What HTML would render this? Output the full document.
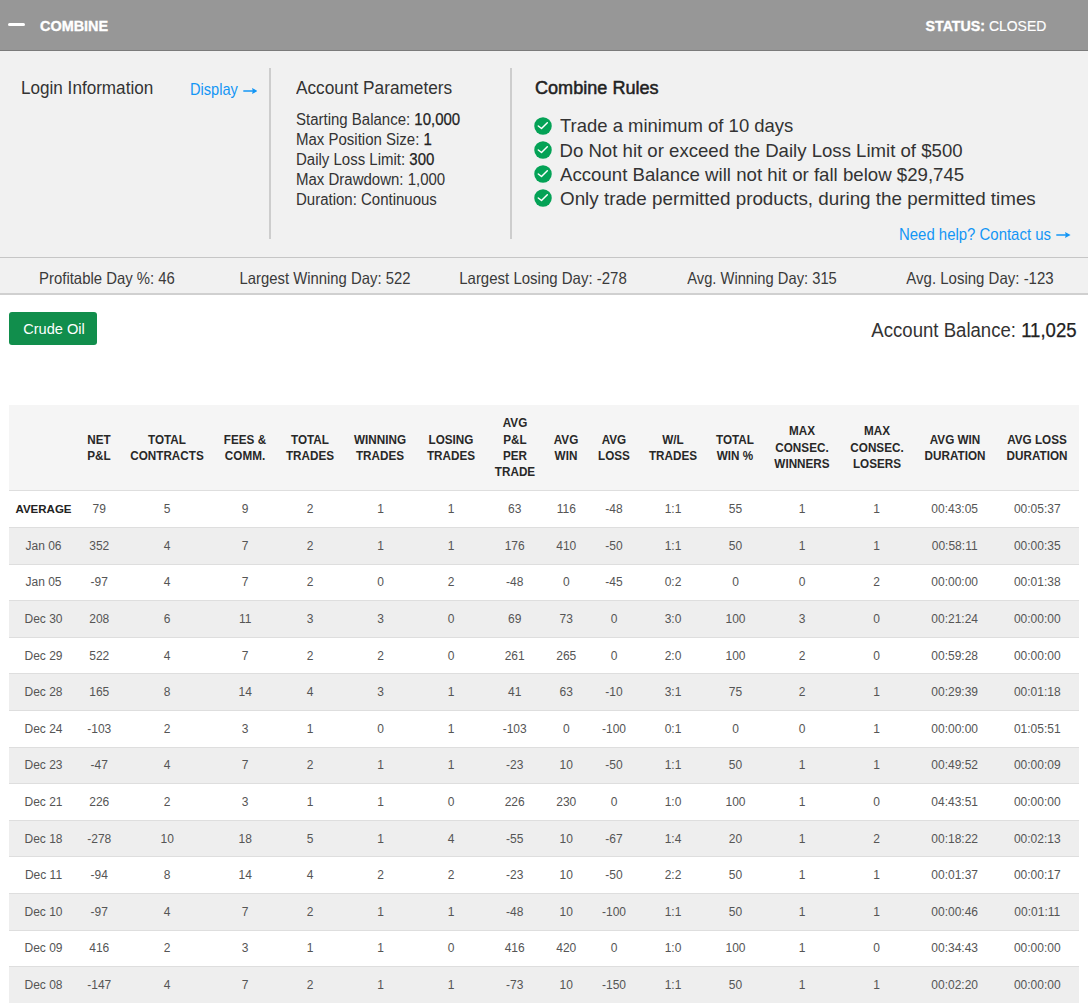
<!DOCTYPE html>
<html><head><meta charset="utf-8"><style>
html,body{margin:0;padding:0;background:#fff;width:1088px;height:1004px;overflow:hidden;position:relative;font-family:"Liberation Sans",sans-serif;color:#333}
.t{position:absolute;white-space:nowrap}
.med{color:#222;-webkit-text-stroke:0.25px #222}
.med2{color:#222 !important;-webkit-text-stroke:0.5px #222}
.hb{-webkit-text-stroke:0.35px #fff}
#hdr{position:absolute;left:0;top:0;width:1088px;height:50px;background:#979797;border-bottom:1px solid #7b7b7b}
#minus{position:absolute;left:7.8px;top:22.6px;width:17.3px;height:3.5px;background:#fff;border-radius:2px}
#panel{position:absolute;left:0;top:51px;width:1088px;height:206px;background:#f1f1f1;border-bottom:1.5px solid #c6c6c6}
#stats{position:absolute;left:0;top:258px;width:1088px;height:35px;background:#f1f1f1;border-bottom:2px solid #d0d0d0}
.vdiv{position:absolute;top:68px;width:2px;height:171px;background:#cdcdcd}
#btn{position:absolute;left:9.4px;top:312.3px;width:88px;height:33px;background:#118e4c;border-radius:3px}
#tbl{position:absolute;left:9.2px;top:404.6px;width:1069.8px;height:600px}
#th{position:absolute;left:0;top:0;width:100%;height:85.4px;background:#f5f5f5;border-bottom:1.5px solid #dedede}
#th .c{top:0.7px;height:85.4px;transform:scaleX(0.975);display:flex;align-items:center;justify-content:center;font-weight:bold;font-size:12px;line-height:16.4px;color:#282828}
.c{position:absolute;width:100px;text-align:center;white-space:nowrap}
.row{position:absolute;left:0;width:100%;height:35.60px;border-top:1px solid #dedede;background:#fff}
.row.odd{background:#eeeeee}
.row .c{top:0.8px;font-size:12px;line-height:35.60px;color:#555}
.row .c.b{font-weight:bold;color:#222;font-size:11.5px}
</style></head><body>
<div id="hdr"><div id="minus"></div></div>
<div class="t hb" style="left:39.90px;top:17.28px;font-size:14.63px;line-height:18.29px;color:#fff;font-weight:bold;transform:scaleX(0.9862);transform-origin:0 0;">COMBINE</div>
<div class="t " style="left:925.60px;top:18.10px;font-size:14.20px;line-height:17.75px;color:#fff;font-weight:normal;"><b class=hb>STATUS:</b> <span style="font-size:13.95px;-webkit-text-stroke:0.15px #fff">CLOSED</span></div>
<div id="panel"></div><div class="vdiv" style="left:269px"></div><div class="vdiv" style="left:510px"></div>
<div class="t " style="left:20.60px;top:75.85px;font-size:18.52px;line-height:23.15px;color:#333;font-weight:normal;transform:scaleX(0.9242);transform-origin:0 0;">Login Information</div>
<div class="t " style="left:190.40px;top:80.05px;font-size:15.69px;line-height:19.62px;color:#1396f5;font-weight:normal;transform:scaleX(0.9302);transform-origin:0 0;">Display</div>
<svg style="position:absolute;left:242.60px;top:85.70px" width="14.6" height="10" viewBox="0 0 14.6 10"><path d="M0.3 5 H11.6" stroke="#1396f5" stroke-width="1.5"/><path d="M9.0 1.9 L14.6 5 L9.0 8.1 L9.8 5 Z" fill="#1396f5"/></svg>
<div class="t " style="left:295.80px;top:75.90px;font-size:18.53px;line-height:23.16px;color:#333;font-weight:normal;transform:scaleX(0.9311);transform-origin:0 0;">Account Parameters</div>
<div class="t " style="left:295.80px;top:110.20px;font-size:16.65px;line-height:19.85px;color:#333;font-weight:normal;transform:scaleX(0.9009);transform-origin:0 0;">Starting Balance: <span class=med>10,000</span><br>Max Position Size: <span class=med>1</span><br>Daily Loss Limit: <span class=med>300</span><br>Max Drawdown: 1,000<br>Duration: Continuous</div>
<div class="t med2" style="left:535.00px;top:76.39px;font-size:18.53px;line-height:23.17px;color:#333;font-weight:normal;transform:scaleX(0.9766);transform-origin:0 0;">Combine Rules</div>
<div style="position:absolute;left:534.3px;top:117.00px;width:18px;height:18px"><svg width="18" height="18" viewBox="0 0 18 18"><circle cx="9" cy="9" r="8.75" fill="#04a256"/><path d="M4.3 9.0 L7.5 11.5 L13.3 5.7" fill="none" stroke="#fff" stroke-width="1.5" stroke-linecap="round" stroke-linejoin="round"/></svg></div>
<div style="position:absolute;left:534.3px;top:141.20px;width:18px;height:18px"><svg width="18" height="18" viewBox="0 0 18 18"><circle cx="9" cy="9" r="8.75" fill="#04a256"/><path d="M4.3 9.0 L7.5 11.5 L13.3 5.7" fill="none" stroke="#fff" stroke-width="1.5" stroke-linecap="round" stroke-linejoin="round"/></svg></div>
<div style="position:absolute;left:534.3px;top:165.30px;width:18px;height:18px"><svg width="18" height="18" viewBox="0 0 18 18"><circle cx="9" cy="9" r="8.75" fill="#04a256"/><path d="M4.3 9.0 L7.5 11.5 L13.3 5.7" fill="none" stroke="#fff" stroke-width="1.5" stroke-linecap="round" stroke-linejoin="round"/></svg></div>
<div style="position:absolute;left:534.3px;top:189.40px;width:18px;height:18px"><svg width="18" height="18" viewBox="0 0 18 18"><circle cx="9" cy="9" r="8.75" fill="#04a256"/><path d="M4.3 9.0 L7.5 11.5 L13.3 5.7" fill="none" stroke="#fff" stroke-width="1.5" stroke-linecap="round" stroke-linejoin="round"/></svg></div>
<div class="t " style="left:559.50px;top:114.43px;font-size:18.60px;line-height:23.25px;color:#333;font-weight:normal;transform:scaleX(0.9930);transform-origin:0 0;">Trade a minimum of 10 days</div>
<div class="t " style="left:559.50px;top:138.63px;font-size:18.60px;line-height:23.25px;color:#333;font-weight:normal;">Do Not hit or exceed the Daily Loss Limit of $500</div>
<div class="t " style="left:559.50px;top:162.83px;font-size:18.60px;line-height:23.25px;color:#333;font-weight:normal;transform:scaleX(1.0027);transform-origin:0 0;">Account Balance will not hit or fall below $29,745</div>
<div class="t " style="left:559.50px;top:187.03px;font-size:18.60px;line-height:23.25px;color:#333;font-weight:normal;transform:scaleX(1.0118);transform-origin:0 0;">Only trade permitted products, during the permitted times</div>
<div class="t " style="left:898.80px;top:224.87px;font-size:15.99px;line-height:19.98px;color:#1396f5;font-weight:normal;transform:scaleX(0.9346);transform-origin:0 0;">Need help? Contact us</div>
<svg style="position:absolute;left:1056.40px;top:229.90px" width="14.6" height="10" viewBox="0 0 14.6 10"><path d="M0.3 5 H11.6" stroke="#1396f5" stroke-width="1.5"/><path d="M9.0 1.9 L14.6 5 L9.0 8.1 L9.8 5 Z" fill="#1396f5"/></svg>
<div id="stats"></div>
<div class="t " style="left:-193.40px;width:600px;text-align:center;top:268.07px;font-size:16.50px;line-height:20.62px;color:#3a3a3a;font-weight:normal;transform:scaleX(0.9030);transform-origin:50% 0;">Profitable Day %: 46</div>
<div class="t " style="left:25.20px;width:600px;text-align:center;top:268.07px;font-size:16.50px;line-height:20.62px;color:#3a3a3a;font-weight:normal;transform:scaleX(0.9000);transform-origin:50% 0;">Largest Winning Day: 522</div>
<div class="t " style="left:242.80px;width:600px;text-align:center;top:268.07px;font-size:16.50px;line-height:20.62px;color:#3a3a3a;font-weight:normal;transform:scaleX(0.9091);transform-origin:50% 0;">Largest Losing Day: -278</div>
<div class="t " style="left:462.25px;width:600px;text-align:center;top:268.07px;font-size:16.50px;line-height:20.62px;color:#3a3a3a;font-weight:normal;transform:scaleX(0.8927);transform-origin:50% 0;">Avg. Winning Day: 315</div>
<div class="t " style="left:680.35px;width:600px;text-align:center;top:268.07px;font-size:16.50px;line-height:20.62px;color:#3a3a3a;font-weight:normal;transform:scaleX(0.9091);transform-origin:50% 0;">Avg. Losing Day: -123</div>
<div id="btn"></div>
<div class="t " style="left:-246.20px;width:600px;text-align:center;top:320.49px;font-size:15.04px;line-height:18.8px;color:#fff;font-weight:normal;transform:scaleX(0.9709);transform-origin:50% 0;">Crude Oil</div>
<div class="t " style="right:11.00px;top:317.84px;font-size:19.72px;line-height:24.65px;color:#333;font-weight:normal;transform:scaleX(0.9434);transform-origin:100% 0;">Account Balance: <span class=med>11,025</span></div>
<div id="tbl"><div id="th"><div class="c" style="left:-15.70px"></div><div class="c" style="left:40.10px">NET<br>P&amp;L</div><div class="c" style="left:108.00px">TOTAL<br>CONTRACTS</div><div class="c" style="left:186.00px">FEES &amp;<br>COMM.</div><div class="c" style="left:250.80px">TOTAL<br>TRADES</div><div class="c" style="left:321.30px">WINNING<br>TRADES</div><div class="c" style="left:391.80px">LOSING<br>TRADES</div><div class="c" style="left:455.50px">AVG<br>P&amp;L<br>PER<br>TRADE</div><div class="c" style="left:507.10px">AVG<br>WIN</div><div class="c" style="left:554.80px">AVG<br>LOSS</div><div class="c" style="left:613.80px">W/L<br>TRADES</div><div class="c" style="left:676.30px">TOTAL<br>WIN %</div><div class="c" style="left:742.80px">MAX<br>CONSEC.<br>WINNERS</div><div class="c" style="left:817.40px">MAX<br>CONSEC.<br>LOSERS</div><div class="c" style="left:895.50px">AVG WIN<br>DURATION</div><div class="c" style="left:978.10px">AVG LOSS<br>DURATION</div></div><div class="row" style="top:85.80px"><div class="c b" style="left:-15.70px">AVERAGE</div><div class="c" style="left:40.10px">79</div><div class="c" style="left:108.00px">5</div><div class="c" style="left:186.00px">9</div><div class="c" style="left:250.80px">2</div><div class="c" style="left:321.30px">1</div><div class="c" style="left:391.80px">1</div><div class="c" style="left:455.50px">63</div><div class="c" style="left:507.10px">116</div><div class="c" style="left:554.80px">-48</div><div class="c" style="left:613.80px">1:1</div><div class="c" style="left:676.30px">55</div><div class="c" style="left:742.80px">1</div><div class="c" style="left:817.40px">1</div><div class="c" style="left:895.50px">00:43:05</div><div class="c" style="left:978.10px">00:05:37</div></div><div class="row odd" style="top:122.40px"><div class="c" style="left:-15.70px">Jan 06</div><div class="c" style="left:40.10px">352</div><div class="c" style="left:108.00px">4</div><div class="c" style="left:186.00px">7</div><div class="c" style="left:250.80px">2</div><div class="c" style="left:321.30px">1</div><div class="c" style="left:391.80px">1</div><div class="c" style="left:455.50px">176</div><div class="c" style="left:507.10px">410</div><div class="c" style="left:554.80px">-50</div><div class="c" style="left:613.80px">1:1</div><div class="c" style="left:676.30px">50</div><div class="c" style="left:742.80px">1</div><div class="c" style="left:817.40px">1</div><div class="c" style="left:895.50px">00:58:11</div><div class="c" style="left:978.10px">00:00:35</div></div><div class="row" style="top:159.00px"><div class="c" style="left:-15.70px">Jan 05</div><div class="c" style="left:40.10px">-97</div><div class="c" style="left:108.00px">4</div><div class="c" style="left:186.00px">7</div><div class="c" style="left:250.80px">2</div><div class="c" style="left:321.30px">0</div><div class="c" style="left:391.80px">2</div><div class="c" style="left:455.50px">-48</div><div class="c" style="left:507.10px">0</div><div class="c" style="left:554.80px">-45</div><div class="c" style="left:613.80px">0:2</div><div class="c" style="left:676.30px">0</div><div class="c" style="left:742.80px">0</div><div class="c" style="left:817.40px">2</div><div class="c" style="left:895.50px">00:00:00</div><div class="c" style="left:978.10px">00:01:38</div></div><div class="row odd" style="top:195.60px"><div class="c" style="left:-15.70px">Dec 30</div><div class="c" style="left:40.10px">208</div><div class="c" style="left:108.00px">6</div><div class="c" style="left:186.00px">11</div><div class="c" style="left:250.80px">3</div><div class="c" style="left:321.30px">3</div><div class="c" style="left:391.80px">0</div><div class="c" style="left:455.50px">69</div><div class="c" style="left:507.10px">73</div><div class="c" style="left:554.80px">0</div><div class="c" style="left:613.80px">3:0</div><div class="c" style="left:676.30px">100</div><div class="c" style="left:742.80px">3</div><div class="c" style="left:817.40px">0</div><div class="c" style="left:895.50px">00:21:24</div><div class="c" style="left:978.10px">00:00:00</div></div><div class="row" style="top:232.20px"><div class="c" style="left:-15.70px">Dec 29</div><div class="c" style="left:40.10px">522</div><div class="c" style="left:108.00px">4</div><div class="c" style="left:186.00px">7</div><div class="c" style="left:250.80px">2</div><div class="c" style="left:321.30px">2</div><div class="c" style="left:391.80px">0</div><div class="c" style="left:455.50px">261</div><div class="c" style="left:507.10px">265</div><div class="c" style="left:554.80px">0</div><div class="c" style="left:613.80px">2:0</div><div class="c" style="left:676.30px">100</div><div class="c" style="left:742.80px">2</div><div class="c" style="left:817.40px">0</div><div class="c" style="left:895.50px">00:59:28</div><div class="c" style="left:978.10px">00:00:00</div></div><div class="row odd" style="top:268.80px"><div class="c" style="left:-15.70px">Dec 28</div><div class="c" style="left:40.10px">165</div><div class="c" style="left:108.00px">8</div><div class="c" style="left:186.00px">14</div><div class="c" style="left:250.80px">4</div><div class="c" style="left:321.30px">3</div><div class="c" style="left:391.80px">1</div><div class="c" style="left:455.50px">41</div><div class="c" style="left:507.10px">63</div><div class="c" style="left:554.80px">-10</div><div class="c" style="left:613.80px">3:1</div><div class="c" style="left:676.30px">75</div><div class="c" style="left:742.80px">2</div><div class="c" style="left:817.40px">1</div><div class="c" style="left:895.50px">00:29:39</div><div class="c" style="left:978.10px">00:01:18</div></div><div class="row" style="top:305.40px"><div class="c" style="left:-15.70px">Dec 24</div><div class="c" style="left:40.10px">-103</div><div class="c" style="left:108.00px">2</div><div class="c" style="left:186.00px">3</div><div class="c" style="left:250.80px">1</div><div class="c" style="left:321.30px">0</div><div class="c" style="left:391.80px">1</div><div class="c" style="left:455.50px">-103</div><div class="c" style="left:507.10px">0</div><div class="c" style="left:554.80px">-100</div><div class="c" style="left:613.80px">0:1</div><div class="c" style="left:676.30px">0</div><div class="c" style="left:742.80px">0</div><div class="c" style="left:817.40px">1</div><div class="c" style="left:895.50px">00:00:00</div><div class="c" style="left:978.10px">01:05:51</div></div><div class="row odd" style="top:342.00px"><div class="c" style="left:-15.70px">Dec 23</div><div class="c" style="left:40.10px">-47</div><div class="c" style="left:108.00px">4</div><div class="c" style="left:186.00px">7</div><div class="c" style="left:250.80px">2</div><div class="c" style="left:321.30px">1</div><div class="c" style="left:391.80px">1</div><div class="c" style="left:455.50px">-23</div><div class="c" style="left:507.10px">10</div><div class="c" style="left:554.80px">-50</div><div class="c" style="left:613.80px">1:1</div><div class="c" style="left:676.30px">50</div><div class="c" style="left:742.80px">1</div><div class="c" style="left:817.40px">1</div><div class="c" style="left:895.50px">00:49:52</div><div class="c" style="left:978.10px">00:00:09</div></div><div class="row" style="top:378.60px"><div class="c" style="left:-15.70px">Dec 21</div><div class="c" style="left:40.10px">226</div><div class="c" style="left:108.00px">2</div><div class="c" style="left:186.00px">3</div><div class="c" style="left:250.80px">1</div><div class="c" style="left:321.30px">1</div><div class="c" style="left:391.80px">0</div><div class="c" style="left:455.50px">226</div><div class="c" style="left:507.10px">230</div><div class="c" style="left:554.80px">0</div><div class="c" style="left:613.80px">1:0</div><div class="c" style="left:676.30px">100</div><div class="c" style="left:742.80px">1</div><div class="c" style="left:817.40px">0</div><div class="c" style="left:895.50px">04:43:51</div><div class="c" style="left:978.10px">00:00:00</div></div><div class="row odd" style="top:415.20px"><div class="c" style="left:-15.70px">Dec 18</div><div class="c" style="left:40.10px">-278</div><div class="c" style="left:108.00px">10</div><div class="c" style="left:186.00px">18</div><div class="c" style="left:250.80px">5</div><div class="c" style="left:321.30px">1</div><div class="c" style="left:391.80px">4</div><div class="c" style="left:455.50px">-55</div><div class="c" style="left:507.10px">10</div><div class="c" style="left:554.80px">-67</div><div class="c" style="left:613.80px">1:4</div><div class="c" style="left:676.30px">20</div><div class="c" style="left:742.80px">1</div><div class="c" style="left:817.40px">2</div><div class="c" style="left:895.50px">00:18:22</div><div class="c" style="left:978.10px">00:02:13</div></div><div class="row" style="top:451.80px"><div class="c" style="left:-15.70px">Dec 11</div><div class="c" style="left:40.10px">-94</div><div class="c" style="left:108.00px">8</div><div class="c" style="left:186.00px">14</div><div class="c" style="left:250.80px">4</div><div class="c" style="left:321.30px">2</div><div class="c" style="left:391.80px">2</div><div class="c" style="left:455.50px">-23</div><div class="c" style="left:507.10px">10</div><div class="c" style="left:554.80px">-50</div><div class="c" style="left:613.80px">2:2</div><div class="c" style="left:676.30px">50</div><div class="c" style="left:742.80px">1</div><div class="c" style="left:817.40px">1</div><div class="c" style="left:895.50px">00:01:37</div><div class="c" style="left:978.10px">00:00:17</div></div><div class="row odd" style="top:488.40px"><div class="c" style="left:-15.70px">Dec 10</div><div class="c" style="left:40.10px">-97</div><div class="c" style="left:108.00px">4</div><div class="c" style="left:186.00px">7</div><div class="c" style="left:250.80px">2</div><div class="c" style="left:321.30px">1</div><div class="c" style="left:391.80px">1</div><div class="c" style="left:455.50px">-48</div><div class="c" style="left:507.10px">10</div><div class="c" style="left:554.80px">-100</div><div class="c" style="left:613.80px">1:1</div><div class="c" style="left:676.30px">50</div><div class="c" style="left:742.80px">1</div><div class="c" style="left:817.40px">1</div><div class="c" style="left:895.50px">00:00:46</div><div class="c" style="left:978.10px">00:01:11</div></div><div class="row" style="top:525.00px"><div class="c" style="left:-15.70px">Dec 09</div><div class="c" style="left:40.10px">416</div><div class="c" style="left:108.00px">2</div><div class="c" style="left:186.00px">3</div><div class="c" style="left:250.80px">1</div><div class="c" style="left:321.30px">1</div><div class="c" style="left:391.80px">0</div><div class="c" style="left:455.50px">416</div><div class="c" style="left:507.10px">420</div><div class="c" style="left:554.80px">0</div><div class="c" style="left:613.80px">1:0</div><div class="c" style="left:676.30px">100</div><div class="c" style="left:742.80px">1</div><div class="c" style="left:817.40px">0</div><div class="c" style="left:895.50px">00:34:43</div><div class="c" style="left:978.10px">00:00:00</div></div><div class="row odd" style="top:561.60px"><div class="c" style="left:-15.70px">Dec 08</div><div class="c" style="left:40.10px">-147</div><div class="c" style="left:108.00px">4</div><div class="c" style="left:186.00px">7</div><div class="c" style="left:250.80px">2</div><div class="c" style="left:321.30px">1</div><div class="c" style="left:391.80px">1</div><div class="c" style="left:455.50px">-73</div><div class="c" style="left:507.10px">10</div><div class="c" style="left:554.80px">-150</div><div class="c" style="left:613.80px">1:1</div><div class="c" style="left:676.30px">50</div><div class="c" style="left:742.80px">1</div><div class="c" style="left:817.40px">1</div><div class="c" style="left:895.50px">00:02:20</div><div class="c" style="left:978.10px">00:00:00</div></div></div>
</body></html>
